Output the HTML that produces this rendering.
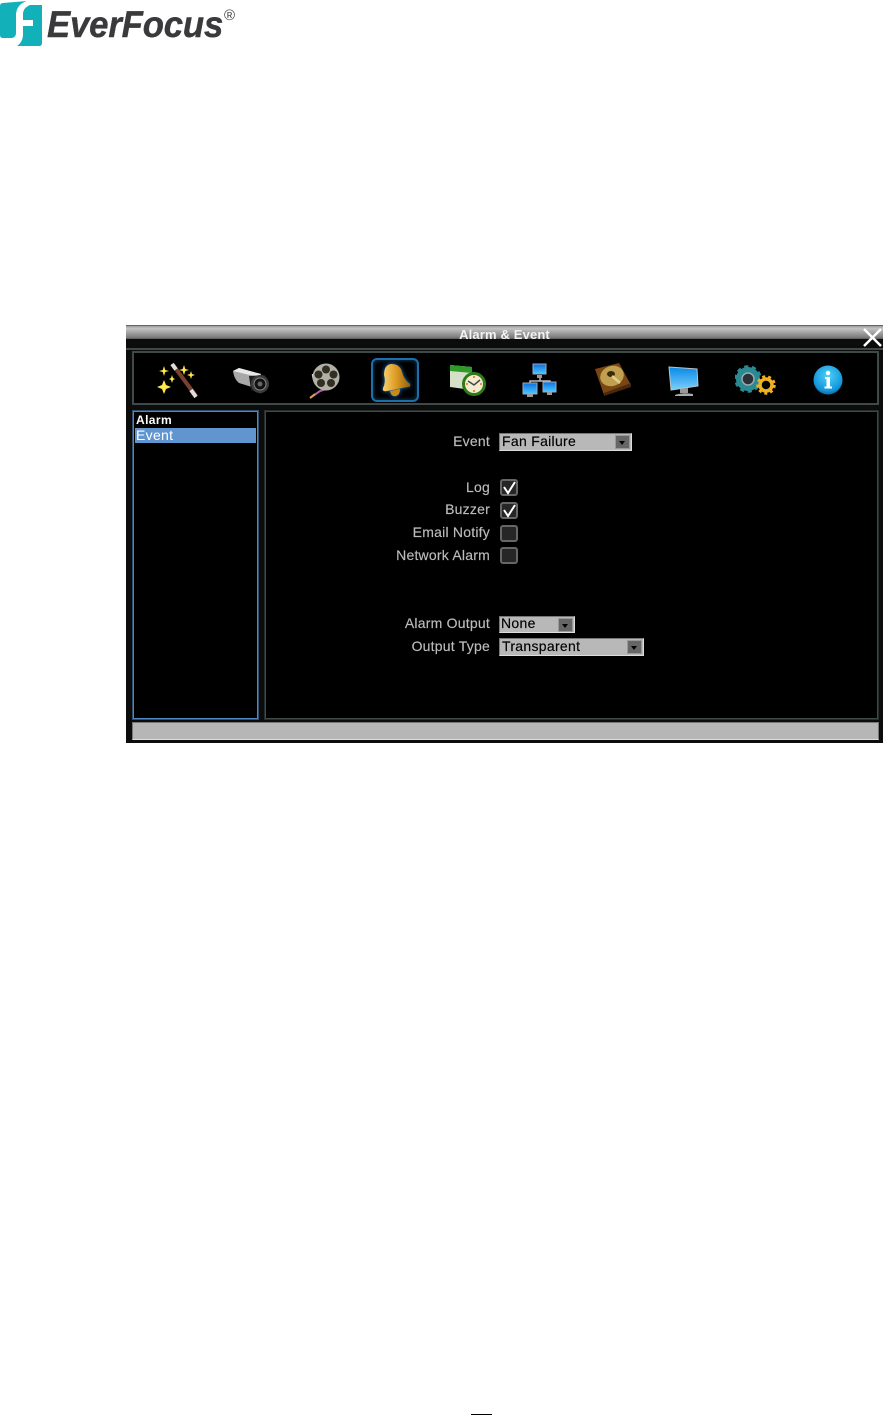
<!DOCTYPE html>
<html><head><meta charset="utf-8"><style>
html,body{margin:0;padding:0;background:#fff}
#p{position:relative;width:883px;height:1415px;overflow:hidden;background:#fff;font-family:"Liberation Sans",sans-serif}
.a{position:absolute}
.l{position:absolute;right:393px;color:#bcbcbc;font-size:14px;line-height:16px;letter-spacing:.22px;white-space:nowrap;-webkit-text-stroke:.15px #bcbcbc}
.s{position:absolute;background:#b8b8b8;border:1px solid #777;border-right-color:#ddd;border-bottom-color:#ddd;box-sizing:border-box;color:#000;font-size:14px;line-height:15px;padding-left:2px;letter-spacing:.3px;-webkit-text-stroke:.15px #000}
.s i{position:absolute;right:1px;top:1px;width:15px;height:14px;background:#666;border:1px solid #999;box-sizing:border-box}
.s i:after{content:"";position:absolute;left:3px;top:5px;border:3px solid transparent;border-top:4px solid #000}
.c{position:absolute;left:500px;width:18px;height:17px;box-sizing:border-box;background:#262626;border:2px solid #666;border-radius:3px}
.c svg{position:absolute;left:-2px;top:-4px}
</style></head><body><div id="p">

<svg class="a" style="left:0;top:0" width="44" height="47" viewBox="0 0 44 47">
<path d="M0 6Q0 3 3 3L27 1Q17 4 16 14V33Q16 37 12 38H3Q0 38 0 35Z" fill="#12b0b8"/>
<path d="M30 5H42V43Q42 46 39 46H17Q23 42 23 34V26H33V20H23V14Q23 8 30 5Z" fill="#12b0b8"/>
</svg>
<div class="a" style="left:47px;top:2px;font:italic bold 37px/46px 'Liberation Sans',sans-serif;color:#3a3a3c;letter-spacing:-.2px;transform-origin:0 0;transform:scaleX(.94);white-space:nowrap;-webkit-text-stroke:.4px #3a3a3c">EverFocus</div>
<div class="a" style="left:224px;top:7px;font:15px/17px 'Liberation Sans',sans-serif;color:#444">®</div>

<div class="a" style="left:126px;top:325px;width:757px;height:418px;background:#0c0c0c;overflow:hidden">
<div class="a" style="left:0;top:0;width:757px;height:14px;background:linear-gradient(#8c8c8c,#c4c4c4 25%,#7a7a7a 90%,#555)"></div>
<div class="a" style="left:0;top:0;width:757px;height:1px;background:#666"></div>
<div class="a" style="left:0;top:23px;width:757px;height:2px;background:#3e4a48"></div>
<div class="a" style="left:0;top:2px;width:757px;text-align:center;color:#f2f2f2;font:bold 13px/15px 'Liberation Sans',sans-serif;letter-spacing:.15px">Alarm &amp; Event</div>
<svg class="a" style="left:736px;top:2px" width="21" height="20"><path d="M2 2L19 19M19 2L2 19" stroke="#fff" stroke-width="2.500"/></svg>
</div>

<div class="a" style="left:132px;top:351px;width:747px;height:54px;box-sizing:border-box;border:2px solid #3d4a48;background:#000"></div>
<div class="a" style="left:132px;top:410px;width:127px;height:310px;box-sizing:border-box;border:1px solid #2e4f72;box-shadow:inset 0 0 0 1px #4f86c6;background:#000"></div>
<div class="a" style="left:264px;top:410px;width:615px;height:310px;box-sizing:border-box;border:1px solid #262e2d;box-shadow:inset 0 0 0 1px #3d4a48;background:#000"></div>
<div class="a" style="left:132px;top:722px;width:747px;height:18px;box-sizing:border-box;background:#b6b6b6;border:1px solid #777;border-bottom:1px solid #ddd"></div>

<!-- wand -->
<svg class="a" style="left:155px;top:360px" width="45" height="42">
<path d="M18 5L41 36" stroke="#7a4030" stroke-width="4"/>
<path d="M17 4L21 9.500M36 30L41 37" stroke="#ddd" stroke-width="4"/>
<g fill="#ffe94a"><path d="M9 6L10.200 10L14 11L10.200 12L9 16L7.800 12L4 11L7.800 10Z"/><path d="M9 20L11 25L16 27L11 29L9 34L7 29L2 27L7 25Z"/><path d="M17 15L18 18L20 19L18 20L17 23L16 20L14 19L16 18Z"/><path d="M29 5L30.300 9L34 10L30.300 11L29 15L27.700 11L24 10L27.700 9Z"/><path d="M36 11L37 14L40 15L37 16L36 19L35 16L32 15L35 14Z"/></g></svg>
<!-- camera -->
<svg class="a" style="left:231px;top:366px" width="42" height="30">
<path d="M2 5L8 2L30 8L27 23L8 17Q3 13 2 5Z" fill="#a8a8a8"/><path d="M2 5L8 2L30 8L27 11Z" fill="#e8e8e8"/>
<path d="M18 10L34 9L38 20L30 28L20 24Z" fill="#1c1c1c"/><circle cx="29" cy="18" r="9" fill="#3c3c3c"/><circle cx="29" cy="18" r="6" fill="#111" stroke="#888"/><circle cx="29" cy="18" r="2.500" fill="#666"/></svg>
<!-- reel -->
<svg class="a" style="left:306px;top:362px" width="36" height="38">
<path d="M4 36L14 29L20 27" stroke="#b060b0" stroke-width="2" fill="none"/><path d="M4 36L9 32" stroke="#e0a040" stroke-width="2"/>
<path d="M7 12Q8 26 24 25" stroke="#ddd" stroke-width="2.500" fill="none"/>
<circle cx="20" cy="15" r="13.500" fill="#b0b0a8"/>
<g fill="#332f20"><circle cx="20" cy="7.500" r="4"/><circle cx="12.500" cy="12.500" r="4"/><circle cx="27.500" cy="12.500" r="4"/><circle cx="15" cy="21" r="4"/><circle cx="25" cy="21" r="4"/></g></svg>
<!-- bell -->
<div class="a" style="left:371px;top:358px;width:48px;height:44px;box-sizing:border-box;border:2px solid #1c6fa8;border-radius:6px;background:#000;box-shadow:inset 0 0 4px #0a4a78"></div>
<svg class="a" style="left:379px;top:362px;filter:drop-shadow(0 0 2px #1c7fd8)" width="34" height="36" viewBox="0 0 34 36">
<defs><linearGradient id="b" x1="0" x2="1"><stop offset="0" stop-color="#f4d070"/><stop offset=".5" stop-color="#dc9a20"/><stop offset="1" stop-color="#90600e"/></linearGradient></defs>
<path d="M12 2Q21 2 23 10Q25 18 31 22Q32 25 28 25L8 29Q3 30 4 26Q7 20 5 13Q5 3 12 2Z" fill="url(#b)"/>
<path d="M11 29Q12 35 17 34Q21 33 21 27Z" fill="#c88a20"/></svg>
<!-- calendar clock -->
<svg class="a" style="left:449px;top:365px" width="40" height="32">
<path d="M1 0L23 2V25L1 22Z" fill="#d4e0c8"/><path d="M1 0L23 2V8L1 6Z" fill="#2e9a2a"/>
<circle cx="25" cy="19" r="12" fill="#2f7a14"/><circle cx="25" cy="19" r="9" fill="#f4ecd0"/><path d="M19 16L25 20L31 15" stroke="#444" stroke-width="1.500" fill="none"/><path d="M25 11V13M25 25V27M17 19H19M31 19H33" stroke="#e07020" stroke-width="1.500"/></svg>
<!-- network -->
<svg class="a" style="left:521px;top:363px" width="38" height="35">
<defs><linearGradient id="n" x1="0" x2="0" y1="0" y2="1"><stop offset="0" stop-color="#0a70e0"/><stop offset="1" stop-color="#50c8ff"/></linearGradient></defs>
<path d="M19 15V18M9 20V18H29V20" stroke="#bbb" stroke-width="1.500" fill="none"/>
<rect x="12" y="1" width="13" height="10" fill="url(#n)" stroke="#9ab"/><rect x="16" y="12" width="5" height="3" fill="#999"/>
<rect x="2" y="20" width="14" height="11" fill="url(#n)" stroke="#9ab"/><rect x="6" y="31" width="6" height="3" fill="#999"/>
<rect x="22" y="19" width="13" height="10" fill="url(#n)" stroke="#9ab"/><rect x="26" y="29" width="5" height="3" fill="#999"/></svg>
<!-- disk -->
<svg class="a" style="left:594px;top:363px" width="38" height="34">
<path d="M1 6L25 0L37 22L10 32Z" fill="#7a4614"/><path d="M10 30L37 20V24L10 33Z" fill="#4a2a0c"/>
<ellipse cx="18" cy="13" rx="12" ry="10" fill="#c0a050" transform="rotate(-20 18 13)"/><ellipse cx="17" cy="11" rx="4" ry="3" fill="#3a2a08"/><path d="M18 13L26 20" stroke="#e0d090" stroke-width="2.500"/></svg>
<!-- monitor -->
<svg class="a" style="left:668px;top:366px" width="32" height="31">
<defs><linearGradient id="m" x1="0" x2="0" y1="0" y2="1"><stop offset="0" stop-color="#0888e8"/><stop offset="1" stop-color="#7ad0fa"/></linearGradient></defs>
<path d="M1 1L29 3L30 20L3 24Z" fill="url(#m)" stroke="#b8c4cc"/><path d="M12 23L20 22V27H12Z" fill="#999"/><path d="M7 29Q15 26 25 28V30H7Z" fill="#aaa"/></svg>
<!-- gears -->
<svg class="a" style="left:735px;top:364px" width="42" height="32">
<circle cx="13" cy="15" r="9" fill="none" stroke="#2a8a94" stroke-width="6"/><circle cx="13" cy="15" r="12" fill="none" stroke="#2a8a94" stroke-width="3.500" stroke-dasharray="4 3.500"/><circle cx="13" cy="15" r="6" fill="#2a3038" stroke="#9aa" stroke-width="1.500"/>
<circle cx="31" cy="21" r="6" fill="none" stroke="#f0b020" stroke-width="3.500"/><circle cx="31" cy="21" r="8.500" fill="none" stroke="#f0b020" stroke-width="2.500" stroke-dasharray="3 3"/></svg>
<!-- info -->
<svg class="a" style="left:813px;top:365px" width="30" height="31">
<defs><radialGradient id="i" cx=".5" cy=".35" r=".7"><stop offset="0" stop-color="#50d0f8"/><stop offset=".75" stop-color="#1296dc"/><stop offset="1" stop-color="#0a5a90"/></radialGradient></defs>
<circle cx="15" cy="15" r="14.500" fill="url(#i)"/><circle cx="15" cy="8" r="2.200" fill="#fff"/><path d="M12 12H17V21.500H19V23.500H11.500V21.500H13.500V14H12Z" fill="#fff"/></svg>

<div class="a" style="left:136px;top:413px;color:#fff;font:bold 12px/14px 'Liberation Sans',sans-serif;letter-spacing:.4px">Alarm</div>
<div class="a" style="left:135px;top:428px;width:121px;height:15px;background:#6195cf;color:#fff;font:14px/15px 'Liberation Sans',sans-serif;letter-spacing:.3px;text-indent:1px">Event</div>

<div class="l" style="top:433px">Event</div>
<div class="s" style="left:499px;top:433px;width:133px;height:18px;line-height:15px">Fan Failure<i></i></div>
<div class="l" style="top:479px">Log</div>
<div class="l" style="top:501px">Buzzer</div>
<div class="l" style="top:524px">Email Notify</div>
<div class="l" style="top:547px">Network Alarm</div>
<div class="c" style="top:479px"><svg width="20" height="20"><path d="M4 10L8 16L15 5" stroke="#fff" stroke-width="2" fill="none"/></svg></div>
<div class="c" style="top:502px"><svg width="20" height="20"><path d="M4 10L8 16L15 5" stroke="#fff" stroke-width="2" fill="none"/></svg></div>
<div class="c" style="top:525px"></div>
<div class="c" style="top:547px"></div>
<div class="l" style="top:615px">Alarm Output</div>
<div class="l" style="top:638px">Output Type</div>
<div class="s" style="left:499px;top:616px;width:76px;height:17px;padding-left:1px;line-height:13px">None<i></i></div>
<div class="s" style="left:499px;top:638px;width:145px;height:18px;line-height:15px;padding-left:2px">Transparent<i></i></div>

<div class="a" style="left:471px;top:1414px;width:21px;height:1px;background:#000"></div>
</div></body></html>
